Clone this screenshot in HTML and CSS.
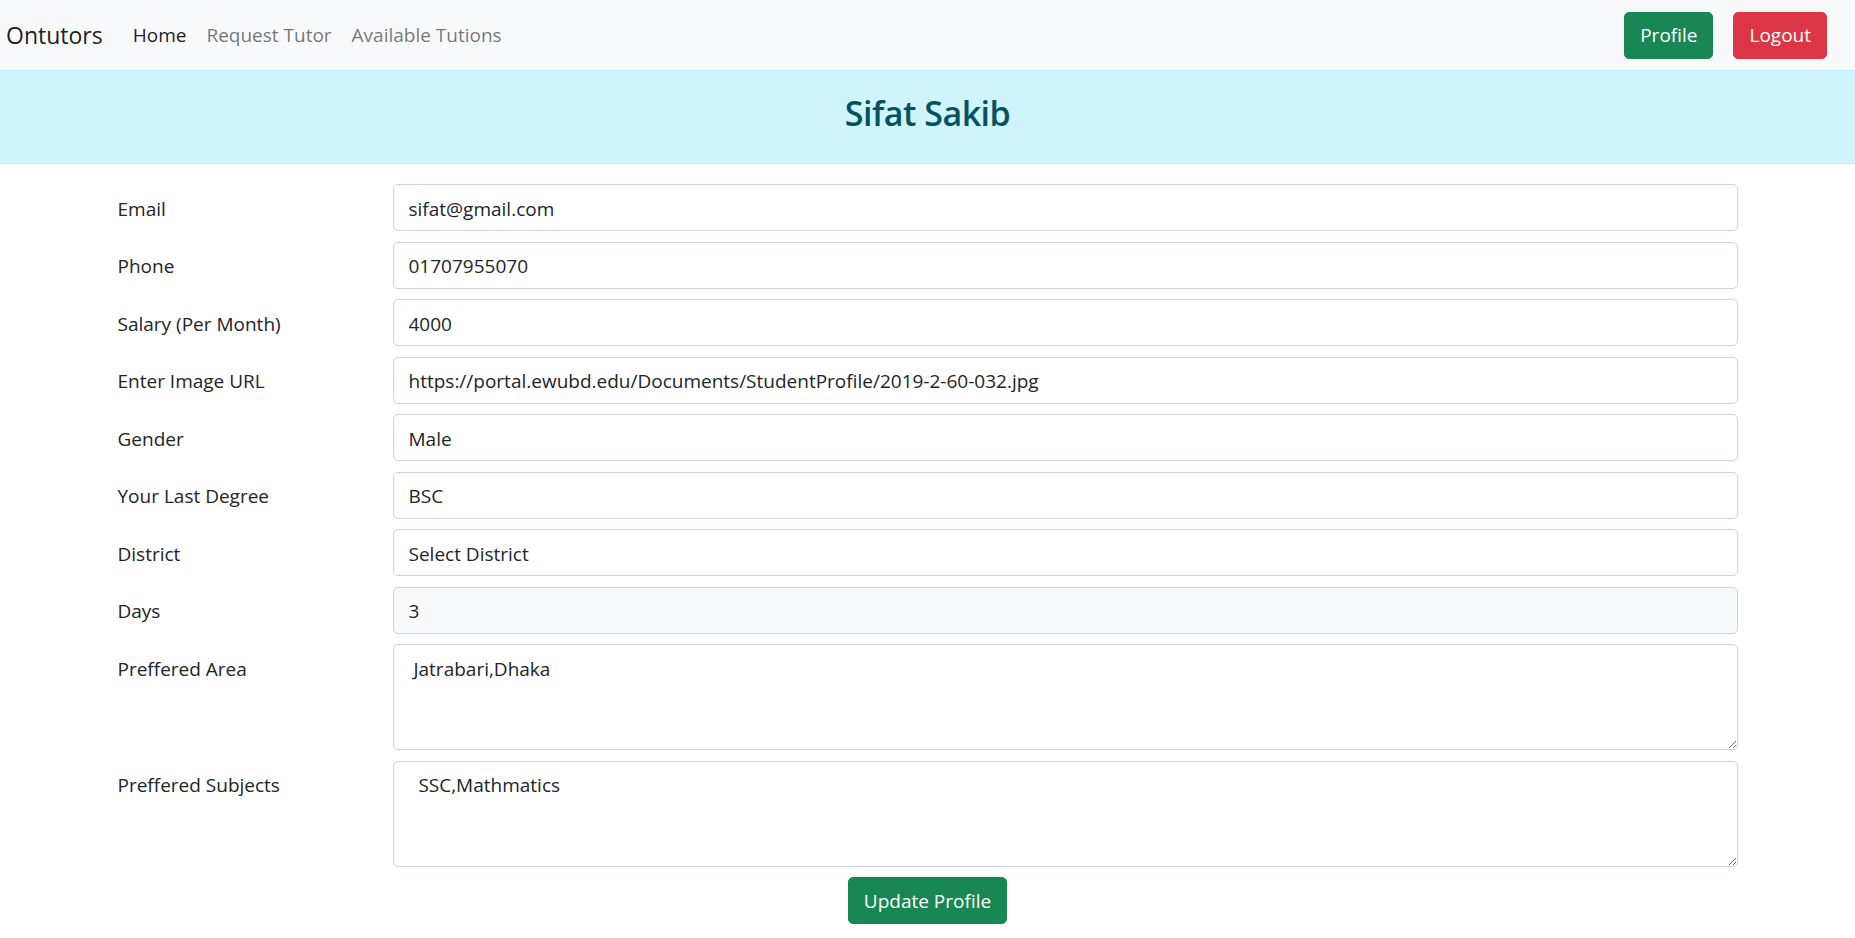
FILE: index.html
```html
<!DOCTYPE html>
<html lang="en">
<head>
<meta charset="utf-8">
<title>Ontutors - Profile</title>
<link rel="stylesheet" href="styles.css">
</head>
<body>
<nav class="navbar">
  <a class="brand" href="#">Ontutors</a>
  <ul class="nav">
    <li><a class="nav-link active" href="#">Home</a></li>
    <li><a class="nav-link" href="#">Request Tutor</a></li>
    <li><a class="nav-link" href="#">Available Tutions</a></li>
  </ul>
  <div class="nav-actions">
    <button class="btn btn-success">Profile</button>
    <button class="btn btn-danger">Logout</button>
  </div>
</nav>
<div class="banner">
  <h2>Sifat Sakib</h2>
</div>
<form class="container">
  <div class="row">
    <label class="col-label">Email</label>
    <div class="col-field"><input class="control" type="text" value="sifat@gmail.com"></div>
  </div>
  <div class="row">
    <label class="col-label">Phone</label>
    <div class="col-field"><input class="control" type="text" value="01707955070"></div>
  </div>
  <div class="row">
    <label class="col-label">Salary (Per Month)</label>
    <div class="col-field"><input class="control" type="text" value="4000"></div>
  </div>
  <div class="row">
    <label class="col-label">Enter Image URL</label>
    <div class="col-field"><input class="control" type="text" value="https://portal.ewubd.edu/Documents/StudentProfile/2019-2-60-032.jpg"></div>
  </div>
  <div class="row">
    <label class="col-label">Gender</label>
    <div class="col-field"><input class="control" type="text" value="Male"></div>
  </div>
  <div class="row">
    <label class="col-label">Your Last Degree</label>
    <div class="col-field"><input class="control" type="text" value="BSC"></div>
  </div>
  <div class="row">
    <label class="col-label">District</label>
    <div class="col-field"><input class="control" type="text" value="Select District"></div>
  </div>
  <div class="row">
    <label class="col-label">Days</label>
    <div class="col-field"><input class="control readonly" type="text" value="3" readonly></div>
  </div>
  <div class="row">
    <label class="col-label">Preffered Area</label>
    <div class="col-field"><textarea class="control area"> Jatrabari,Dhaka</textarea></div>
  </div>
  <div class="row">
    <label class="col-label">Preffered Subjects</label>
    <div class="col-field"><textarea class="control area">  SSC,Mathmatics</textarea></div>
  </div>
  <div class="submit-row">
    <button class="btn btn-success" type="button">Update Profile</button>
  </div>
</form>
</body>
</html>
```
FILE: styles.css
```css
* { box-sizing: border-box; }
html, body { margin: 0; padding: 0; }
body {
  font-family: "Open Sans", "Noto Sans", "Liberation Sans", sans-serif;
  font-size: 19px;
  line-height: 30px;
  color: #212529;
  background: #fff;
}
.navbar {
  height: 70px;
  background: #f8f9fa;
  display: flex;
  align-items: center;
  padding: 0 28px 0 6px;
}
.brand {
  font-size: 23px;
  color: rgba(0,0,0,.9);
  text-decoration: none;
  margin-right: 20px;
  line-height: 37px;
}
.nav {
  display: flex;
  list-style: none;
  margin: 0;
  padding: 0;
  flex: 1;
}
.nav-link {
  display: block;
  padding: 10px;
  font-size: 19px;
  color: rgba(0,0,0,.55);
  text-decoration: none;
}
.nav-link.active { color: rgba(0,0,0,.9); }
.nav-actions { display: flex; gap: 20px; }
.btn {
  font-family: inherit;
  font-size: 19px;
  line-height: 30px;
  padding: 7.5px 15px;
  border: 1px solid transparent;
  border-radius: 5px;
  color: #fff;
  cursor: pointer;
}
.btn-success { background: #198754; border-color: #198754; }
.btn-danger { background: #dc3545; border-color: #dc3545; }
.banner {
  background: #cff4fc;
  border-top: 1px solid #b6effb;
  border-bottom: 1px solid #b6effb;
  color: #055160;
  text-align: center;
  padding: 18px 0 26px;
  margin-bottom: 20px;
}
.banner h2 {
  margin: 0;
  font-size: 34px;
  line-height: 48px;
  font-weight: 600;
  letter-spacing: -0.5px;
}
.container {
  width: 1650px;
  margin: 0 auto;
  padding: 0 15px;
}
.row {
  display: flex;
  margin-bottom: 10.5px;
}
.col-label {
  width: 275px;
  padding-top: 9.5px;
  padding-bottom: 7.5px;
  flex: none;
}
.col-field { flex: 1; }
.control {
  display: block;
  width: 100%;
  font-family: inherit;
  font-size: 19px;
  line-height: 30px;
  color: #212529;
  padding: 8.5px 15px 6.5px;
  background: #fff;
  border: 1px solid #ced4da;
  border-radius: 5px;
  margin: 0;
}
.control.readonly { background: #f8f9fa; }
.control.area { height: 106px; resize: vertical; }
.submit-row {
  display: flex;
  justify-content: center;
}
```
